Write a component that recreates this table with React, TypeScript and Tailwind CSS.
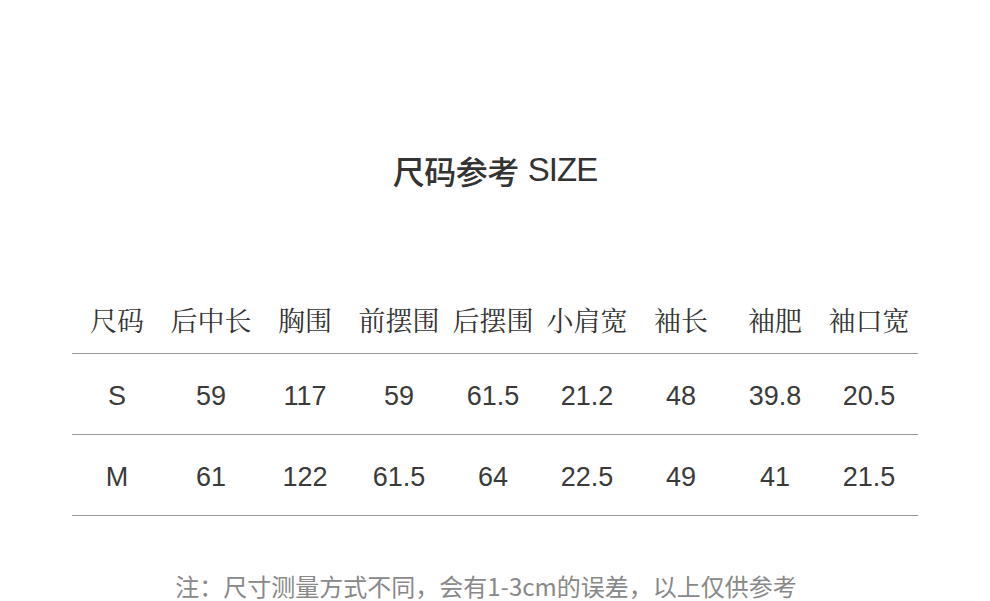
const headers = ["尺码", "后中长", "胸围", "前摆围", "后摆围", "小肩宽", "袖长", "袖肥", "袖口宽"];

const rows = [
  ["S", "59", "117", "59", "61.5", "21.2", "48", "39.8", "20.5"],
  ["M", "61", "122", "61.5", "64", "22.5", "49", "41", "21.5"],
];

const App = () => {
  return (
    <div className="w-[990px] h-[601px] bg-white overflow-hidden flex flex-col items-center">
      <h1 className="mt-[148px] h-[44px] flex items-center text-[32px] font-medium text-[#333] font-['Noto_Sans_CJK_SC',sans-serif] tracking-[-0.5px]">
        尺码参考
        <span className="ml-[9px] font-normal font-['Liberation_Sans',sans-serif] text-[33px] tracking-[-1px]">SIZE</span>
      </h1>

      <div className="mt-[98px] w-[846px] font-['Noto_Serif_CJK_SC','Noto_Sans_CJK_SC',serif]">
        <div className="grid grid-cols-9 h-[64px] items-center border-b border-[#999] text-[27px] text-[#333]">
          {headers.map((h) => (
            <div key={h} className="text-center -translate-x-[2px] -translate-y-[1px]">{h}</div>
          ))}
        </div>
        {rows.map((row) => (
          <div
            key={row[0]}
            className="grid grid-cols-9 h-[81px] items-center border-b border-[#999] text-[27px] text-[#3a3a3a] font-['Liberation_Sans',sans-serif]"
          >
            {row.map((v, i) => (
              <div key={i} className="text-center -translate-x-[2px] translate-y-[2px]">{v}</div>
            ))}
          </div>
        ))}
      </div>

      <p className="mt-[58px] mr-[18px] text-[24px] text-[#888] font-['Noto_Sans_CJK_SC',sans-serif] leading-[24px]">
        注：尺寸测量方式不同，会有1-3cm的误差，以上仅供参考
      </p>
    </div>
  );
};

export default App;
